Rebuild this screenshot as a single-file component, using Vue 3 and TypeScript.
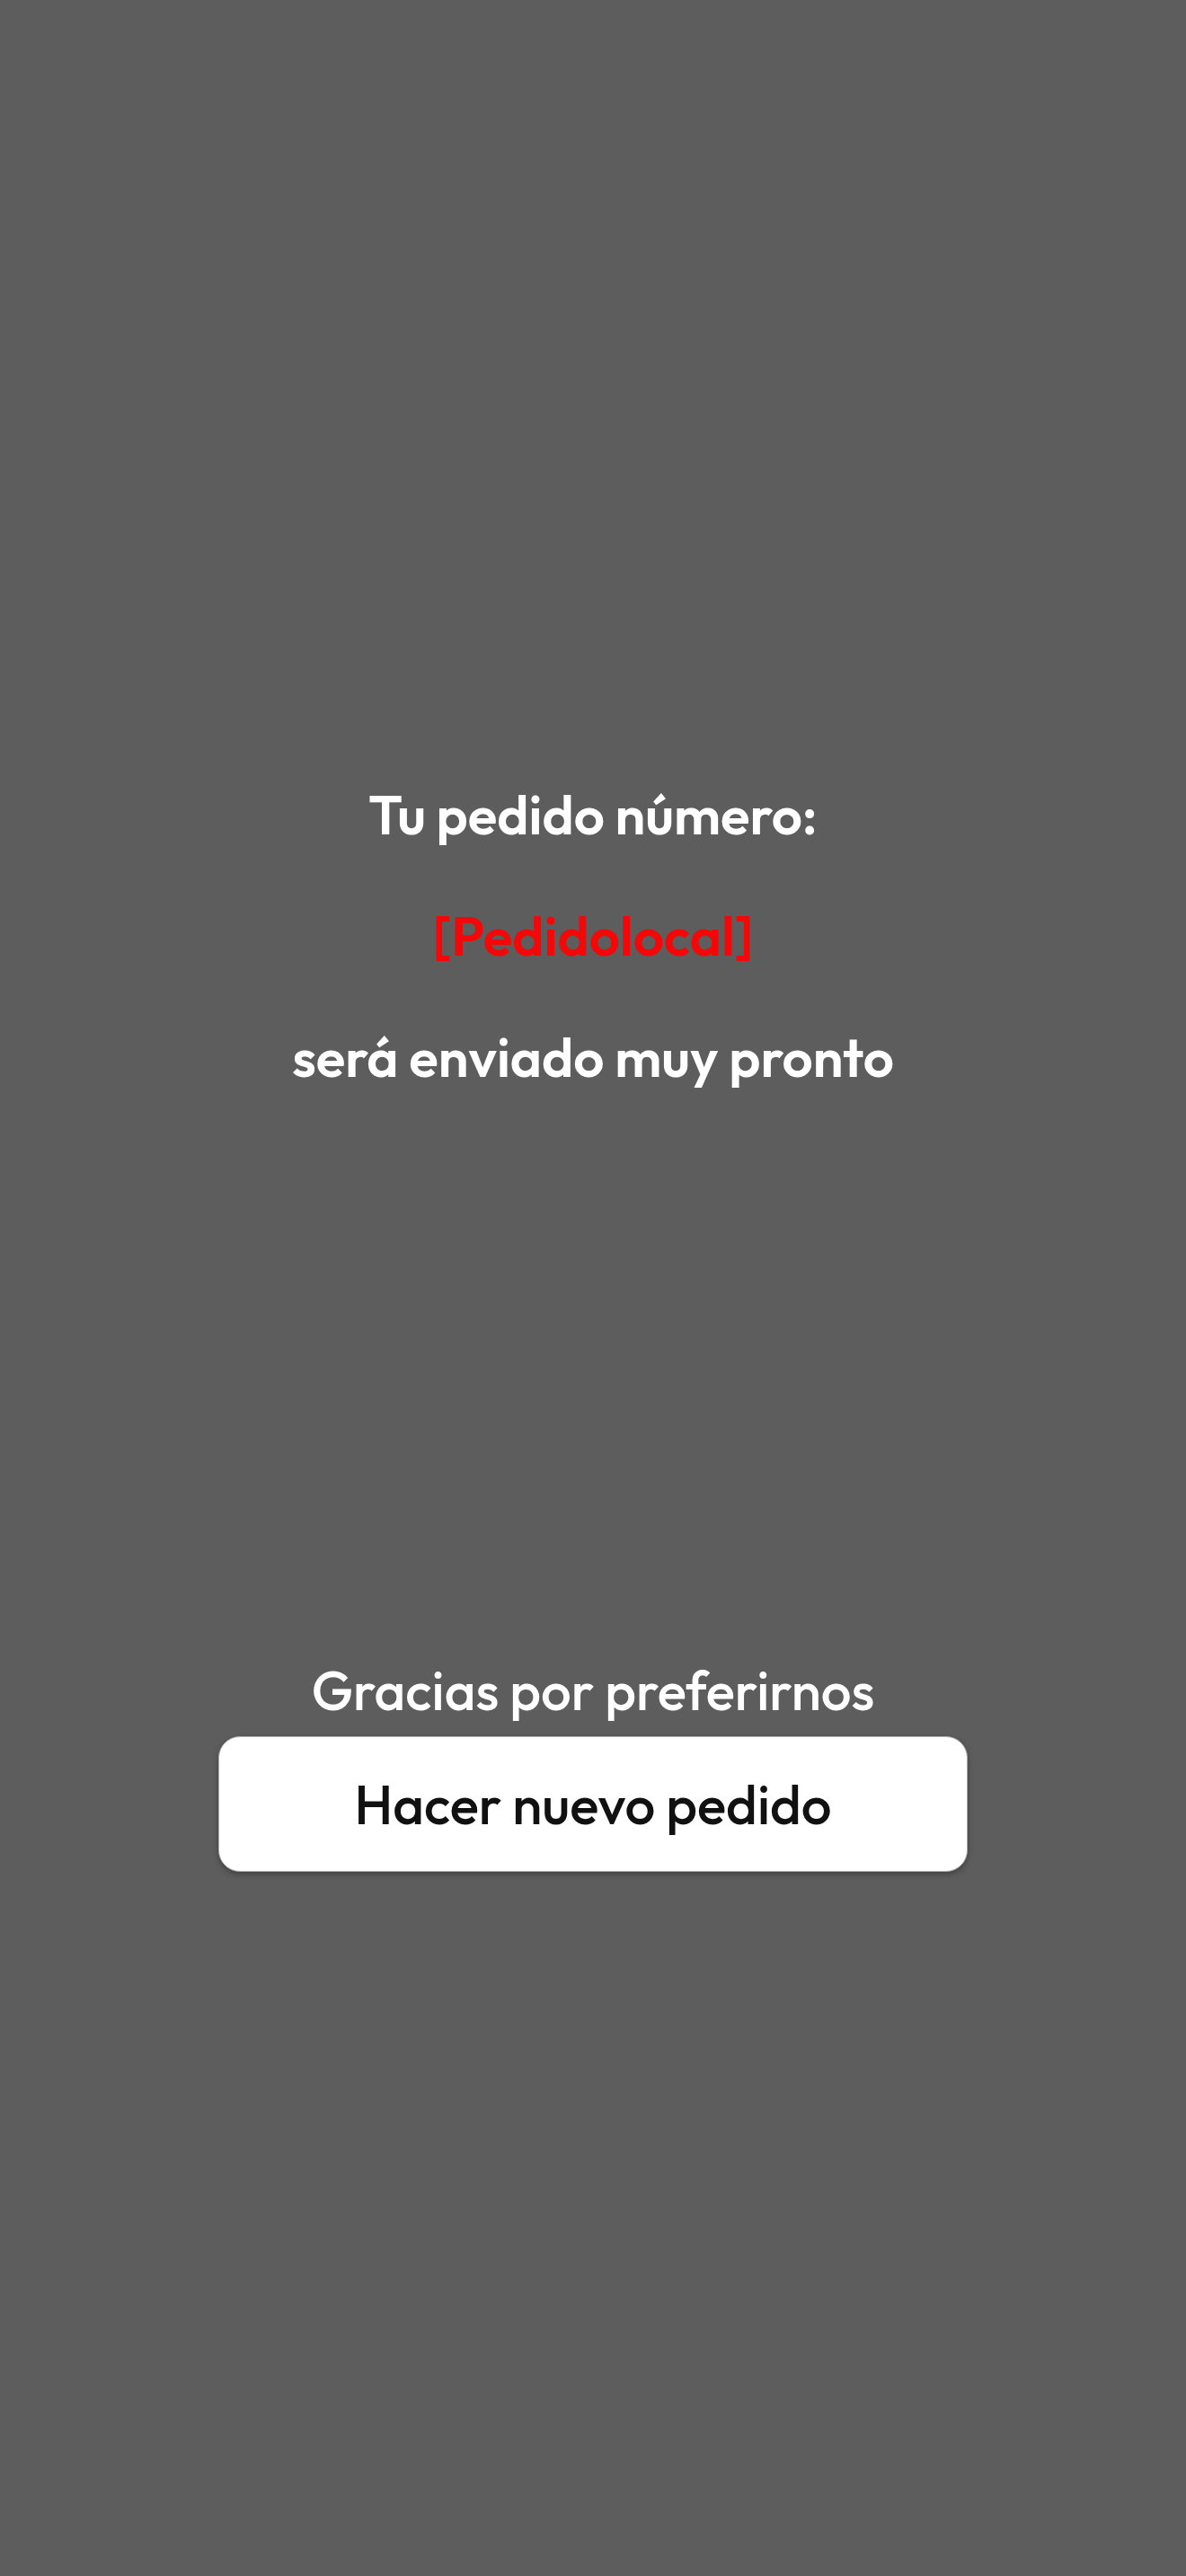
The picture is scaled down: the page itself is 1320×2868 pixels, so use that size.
<script setup lang="ts">
import { ref } from 'vue'

const orderCode = ref<string>('[Pedidolocal]')
</script>

<template>
  <main class="screen">
    <section class="status">
      <p class="line">Tu pedido número:</p>
      <p class="line code">{{ orderCode }}</p>
      <p class="line">será enviado muy pronto</p>
    </section>
    <section class="actions">
      <p class="thanks">Gracias por preferirnos</p>
      <button type="button" class="new-order">Hacer nuevo pedido</button>
    </section>
  </main>
</template>

<style>
body {
  background: #5d5d5d;
}
</style>

<style scoped>
.screen {
  display: flex;
  flex-direction: column;
  align-items: center;
  min-height: 100vh;
  box-sizing: border-box;
  padding-top: 867px;
  background: #5d5d5d;
  color: #fff;
  font-family: Outfit, Lato, sans-serif;
  font-size: 60px;
  font-weight: 500;
  line-height: 80px;
  text-align: center;
}

.status {
  display: flex;
  flex-direction: column;
  gap: 55px;
}

p {
  margin: 0;
}

.line {
  font-weight: 600;
}

.line.code {
  color: #f60606;
}

.actions {
  display: flex;
  flex-direction: column;
  width: 100%;
  box-sizing: border-box;
  margin-top: 625px;
  padding: 0 243px;
  gap: 11px;
}

.new-order {
  min-height: 151px;
  padding: 0;
  border: 1px solid #aaa;
  border-radius: 24px;
  background: #fff;
  color: #111;
  font: inherit;
  box-shadow: 0 3px 6px rgba(0, 0, 0, 0.3);
  cursor: pointer;
}
</style>
